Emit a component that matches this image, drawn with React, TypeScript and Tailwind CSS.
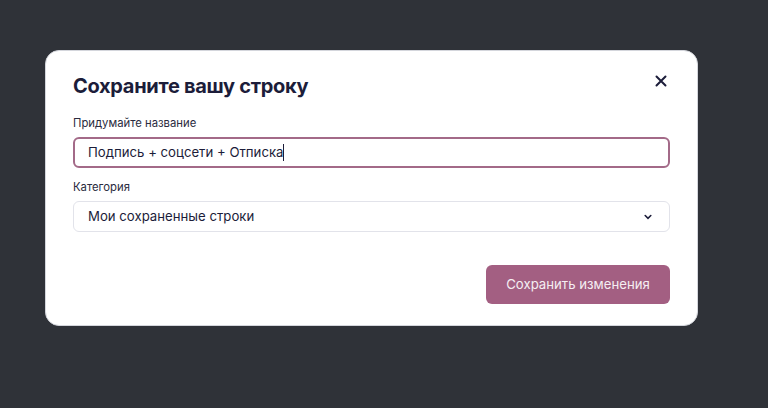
import React from "react";

export default function App() {
  return (
    <div
      className="w-[768px] h-[408px] bg-[#2f3238] pt-[50px] pl-[45px]"
      style={{ fontFamily: "Inter, 'Noto Sans', sans-serif" }}
    >
      <div className="w-[653px] h-[276px] bg-white rounded-[14px] border border-[#d4d6dc] pl-[27px] pr-[27px] pt-[21px]">
        <div className="flex items-center justify-between h-[28px]">
          <h2 className="text-[20px] font-bold tracking-[-0.3px] text-[#1c1d3a]">Сохраните вашу строку</h2>
          <svg width="12" height="12" viewBox="0 0 12 12" className="mr-[3px] mt-[-11px]">
            <path d="M1.5 1.5 L10.5 10.5 M10.5 1.5 L1.5 10.5" stroke="#1c1d3a" strokeWidth="2" strokeLinecap="round" />
          </svg>
        </div>
        <div className="mt-[15px] text-[11.3px] text-[#2a2b40] leading-[16px]">Придумайте название</div>
        <div className="mt-[6px] h-[31px] rounded-[6px] border-2 border-[#a36a88] flex items-center pl-[13px] text-[13.2px] text-[#1c1d3a]">
          <span>Подпись + соцсети + Отписка</span>
          <span className="w-px h-[17px] bg-[#1c1d3a]" />
        </div>
        <div className="mt-[11px] text-[11.3px] text-[#2a2b40] leading-[16px]">Категория</div>
        <div className="mt-[6px] h-[31px] rounded-[6px] border border-[#e2e3ea] flex items-center justify-between pl-[14px] pr-[17px] text-[13.2px] text-[#1c1d3a]">
          <span>Мои сохраненные строки</span>
          <svg width="8" height="6" viewBox="0 0 8 6">
            <path d="M1.2 1.5 L4 4.3 L6.8 1.5" stroke="#1c1d3a" strokeWidth="1.6" fill="none" strokeLinecap="round" />
          </svg>
        </div>
        <div className="mt-[33px] flex justify-end">
          <button className="w-[184px] h-[39px] rounded-[6px] bg-[#a35f82] text-[#f5eef2] text-[13.2px]">Сохранить изменения</button>
        </div>
      </div>
    </div>
  );
}
